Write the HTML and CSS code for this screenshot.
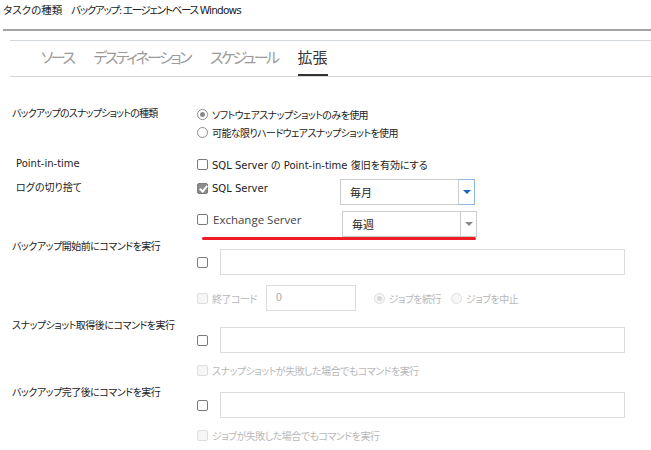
FILE: index.html
```html
<!DOCTYPE html>
<html lang="ja">
<head>
    <meta charset="UTF-8">
    <title>拡張</title>
    <link rel="stylesheet" href="styles.css">
</head>
<body>
    <div class="task-bar">タスクの種類<span class="task-value">バックアップ: エージェントベース <span class="latin">Windows</span></span></div>

    <div class="tabs">
        <div class="tab">ソース</div>
        <div class="tab">デスティネーション</div>
        <div class="tab">スケジュール</div>
        <div class="tab active">拡張</div>
    </div>

    <div class="form">
        <div class="row snapshot-row">
            <div class="label">バックアップのスナップショットの種類</div>
            <div class="control jp">
                <div class="line"><span class="radio on"></span>ソフトウェアスナップショットのみを使用</div>
                <div class="line"><span class="radio"></span>可能な限りハードウェアスナップショットを使用</div>
            </div>
        </div>

        <div class="row pit-row">
            <div class="label indent">Point-in-time</div>
            <div class="control">
                <div class="line"><span class="check"></span>SQL Server の Point-in-time 復旧を有効にする</div>
            </div>
        </div>

        <div class="row trunc-row">
            <div class="label indent">ログの切り捨て</div>
            <div class="control">
                <div class="select-line">
                    <div class="line opt"><span class="check on"></span>SQL Server</div>
                    <div class="select focus"><span class="select-text">毎月</span><span class="select-btn"><i></i></span></div>
                </div>
                <div class="select-line exchange">
                    <div class="line opt exch"><span class="check"></span>Exchange Server</div>
                    <div class="select"><span class="select-text">毎週</span><span class="select-btn"><i></i></span></div>
                    <div class="mark"></div>
                </div>
            </div>
        </div>

        <div class="row cmd-row pre">
            <div class="label">バックアップ開始前にコマンドを実行</div>
            <div class="control">
                <div class="cmd-line"><span class="check"></span><div class="input"></div></div>
                <div class="exit-line">
                    <span class="check off"></span><span class="muted">終了コード</span>
                    <div class="input small"><span>0</span></div>
                    <span class="radio on off"></span><span class="muted">ジョブを続行</span>
                    <span class="radio off"></span><span class="muted">ジョブを中止</span>
                </div>
            </div>
        </div>

        <div class="row cmd-row post-snap">
            <div class="label">スナップショット取得後にコマンドを実行</div>
            <div class="control">
                <div class="cmd-line"><span class="check"></span><div class="input"></div></div>
                <div class="line sub"><span class="check off"></span><span class="muted">スナップショットが失敗した場合でもコマンドを実行</span></div>
            </div>
        </div>

        <div class="row cmd-row post-job">
            <div class="label">バックアップ完了後にコマンドを実行</div>
            <div class="control">
                <div class="cmd-line"><span class="check"></span><div class="input"></div></div>
                <div class="line sub"><span class="check off"></span><span class="muted">ジョブが失敗した場合でもコマンドを実行</span></div>
            </div>
        </div>
    </div>
</body>
</html>
```

FILE: styles.css
```css
* {
    box-sizing: border-box;
}
body {
    margin: 0;
    background: #ffffff;
    color: #222222;
    font-family: "DejaVu Sans", "Noto Sans CJK JP", sans-serif;
    font-size: 10px;
    font-feature-settings: "palt";
}
.task-bar {
    margin-left: 3px;
    height: 31px;
    padding-top: 3px;
    line-height: 14px;
    border-bottom: 2px solid #a3a3a3;
    font-size: 10.5px;
}
.task-value {
    margin-left: 9px;
    letter-spacing: -1.3px;
}
.task-value .latin {
    letter-spacing: -0.8px;
}
.tabs {
    margin: 9px 0 0 10px;
    height: 37px;
    padding-left: 31px;
    display: flex;
    gap: 20px;
    border-top: 1px solid #d3d8dc;
    border-bottom: 1px solid #d3d8dc;
}
.tab {
    font-family: "Noto Sans CJK JP", sans-serif;
    font-size: 15px;
    color: #9a9a9a;
    height: 35px;
    line-height: 30px;
    padding-top: 1px;
    letter-spacing: -2.5px;
}
.tab.active {
    color: #333333;
    letter-spacing: 0;
    border-bottom: 2px solid #333333;
}
.form {
    padding-left: 12px;
}
.row {
    display: grid;
    grid-template-columns: 185px 1fr;
}
.label {
    line-height: 14px;
    letter-spacing: -0.5px;
}
.snapshot-row .label {
    letter-spacing: -0.8px;
}
.label.indent {
    padding-left: 4px;
    letter-spacing: 0;
}
.jp {
    letter-spacing: -0.6px;
}
.line {
    display: flex;
    align-items: center;
    height: 18px;
}
.snapshot-row {
    margin-top: 28px;
}
.snapshot-row .label {
    padding-top: 2px;
}
.pit-row {
    margin-top: 14px;
}
.pit-row .label,
.trunc-row .label {
    padding-top: 2px;
}
.trunc-row {
    margin-top: 6px;
}
.check,
.radio {
    flex: none;
    display: inline-block;
    width: 11px;
    height: 11px;
    border: 1px solid #7a7a7a;
    background: #ffffff;
    margin-right: 4px;
    position: relative;
}
.check {
    border-radius: 2px;
}
.check.on {
    background: #8c8c8c;
    border-color: #7c7c7c;
}
.check.on::after {
    content: "";
    position: absolute;
    left: 3px;
    top: 0px;
    width: 3px;
    height: 6px;
    border: solid #ffffff;
    border-width: 0 2px 2px 0;
    transform: rotate(40deg);
}
.radio {
    border-radius: 50%;
    border-color: #8e8e8e;
}
.radio.on::after {
    content: "";
    position: absolute;
    left: 2px;
    top: 2px;
    width: 5px;
    height: 5px;
    border-radius: 50%;
    background: #8a8a8a;
}
.check.off,
.radio.off {
    border-color: #dedede;
    background: #f6f6f6;
}
.radio.on.off::after {
    background: #d8d8d8;
}
.select-line {
    display: flex;
    align-items: flex-start;
    position: relative;
}
.select-line .opt {
    width: 143px;
}
.exchange {
    margin-top: 6px;
}
.exchange .select {
    margin-left: 2px;
}
.opt.exch {
    height: 16px;
    font-family: "Open Sans", sans-serif;
    font-size: 11.5px;
    color: #444444;
}
.opt.exch .check {
    margin-right: 5px;
}
.select {
    display: flex;
    width: 135px;
    height: 26px;
    border: 1px solid #cccccc;
}
.select-text {
    flex: 1;
    padding-left: 9px;
    line-height: 24px;
    font-size: 11px;
    font-family: "Noto Sans CJK JP", sans-serif;
}
.select-btn {
    width: 17px;
    margin: -1px -1px -1px 0;
    border-left: 1px solid #cccccc;
    display: flex;
    align-items: center;
    justify-content: center;
}
.select.focus .select-btn {
    border: 1px solid #8fb8e3;
    border-left-color: #cccccc;
}
.select-btn i {
    width: 0;
    height: 0;
    border-left: 4px solid transparent;
    border-right: 4px solid transparent;
    border-top: 4px solid #8a8a8a;
}
.select.focus .select-btn i {
    border-top-color: #1565b8;
}
.mark {
    position: absolute;
    left: 5px;
    top: 26px;
    width: 274px;
    height: 3px;
    border-radius: 2px;
    background: #ee1d25;
}
.cmd-row {
    margin-top: 3px;
}
.cmd-row .control {
    padding-top: 9px;
}
.cmd-line {
    display: flex;
    align-items: center;
}
.cmd-line .check {
    margin-right: 12px;
}
.input {
    width: 405px;
    height: 26px;
    border: 1px solid #dcdcdc;
    background: #ffffff;
}
.exit-line {
    margin-top: 10px;
    display: flex;
    align-items: center;
}
.muted {
    color: #b8b8b8;
    letter-spacing: -0.5px;
}
.input.small {
    width: 90px;
    margin: 0 18px 0 9px;
    padding-left: 9px;
    line-height: 24px;
    color: #aaaaaa;
}
.exit-line .radio {
    margin-right: 4px;
}
.exit-line .muted + .radio {
    margin-left: 10px;
}
.post-snap {
    margin-top: 8px;
}
.post-snap .control {
    padding-top: 8px;
}
.sub {
    margin-top: 8px;
}
.post-job {
    margin-top: 7px;
}
.post-job .control {
    padding-top: 6px;
}
```
